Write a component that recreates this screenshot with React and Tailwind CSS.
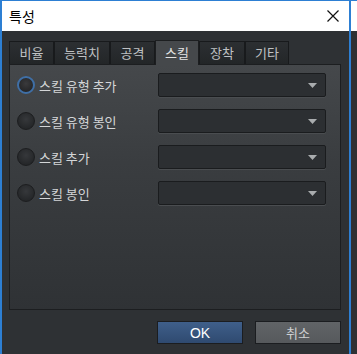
import React from "react";

const tabs = [
  { label: "비율", w: "w-[45px]" },
  { label: "능력치", w: "w-[56px]" },
  { label: "공격", w: "w-[45px]" },
  { label: "스킬", w: "w-[44px]", active: true },
  { label: "장착", w: "w-[46px]" },
  { label: "기타", w: "w-[44px]" },
];

const rows = [
  { label: "스킬 유형 추가", checked: true },
  { label: "스킬 유형 봉인" },
  { label: "스킬 추가" },
  { label: "스킬 봉인" },
];

function Radio({ checked }) {
  return (
    <div
      className={
        "w-[18px] h-[18px] rounded-full shrink-0 " +
        (checked
          ? "border-[2px] border-[#3f6fa6] bg-[radial-gradient(circle_at_50%_40%,#3a3a3c,#1d1e20)]"
          : "border border-[#1c1d1f] bg-[radial-gradient(circle_at_50%_40%,#36383b,#1e2022)]")
      }
    />
  );
}

function Select() {
  return (
    <div className="w-[168px] h-[24px] rounded-[2px] border border-[#1a1c1e] bg-[#2c2f32] shadow-[0_1px_0_#4a4d50] flex items-center justify-end pr-[8px]">
      <svg width="9" height="5" viewBox="0 0 9 5">
        <path d="M0 0 L9 0 L4.5 5 Z" fill="#a9acae" />
      </svg>
    </div>
  );
}

export default function App() {
  const font = { fontFamily: '"Noto Sans CJK KR", "Noto Sans", sans-serif' };
  return (
    <div className="w-[357px] h-[354px] flex overflow-hidden bg-[#2e3134]" style={font}>
      <div className="w-[2px] bg-[#2d7fd3]" />
      <div className="w-[347px] flex flex-col">
        <div className="h-[31px] bg-white border-t border-[#2d7fd3] flex items-center justify-between pl-[7px] pr-[10px]">
          <span className="text-[14px] text-black leading-none">특성</span>
          <svg width="12" height="12" viewBox="0 0 12 12">
            <path d="M0.5 0.5 L11.5 11.5 M11.5 0.5 L0.5 11.5" stroke="#111" strokeWidth="1.2" />
          </svg>
        </div>
        <div className="flex-1 flex flex-col bg-[#2e3134] px-[7px] pt-[10px]">
          <div className="flex items-end h-[23px] relative z-10">
            {tabs.map((t) =>
              t.active ? (
                <div
                  key={t.label}
                  className={t.w + " h-[25px] -mb-[1px] bg-[#45484b] border border-b-0 border-[#1c1e20] flex items-center justify-center text-[13px] text-[#e4e4e4]"}
                >
                  {t.label}
                </div>
              ) : (
                <div
                  key={t.label}
                  className={t.w + " h-[23px] bg-[linear-gradient(#2c2f32,#232628)] border border-[#181a1c] border-b-0 flex items-center justify-center text-[13px] text-[#bfc1c3]"}
                >
                  {t.label}
                </div>
              )
            )}
          </div>
          <div className="w-[332px] h-[246px] border border-[#1c1e20] bg-[linear-gradient(#45484b,#3a3d40_40%,#2f3235)] pl-[7px] pt-[8px] flex flex-col gap-[12px]">
            {rows.map((r) => (
              <div key={r.label} className="flex items-center h-[24px]">
                <div className="w-[141px] flex items-center gap-[4px]">
                  <Radio checked={r.checked} />
                  <span className="text-[13px] text-[#d4d6d8] leading-none">{r.label}</span>
                </div>
                <Select />
              </div>
            ))}
          </div>
          <div className="flex justify-end gap-[12px] mt-[11px] pr-[1px]">
            <div className="w-[86px] h-[23px] border border-[#1b1d20] bg-[linear-gradient(#3f5f8a,#2f4a70)] flex items-center justify-center text-[14px] text-white leading-none" style={{ fontFamily: '"Liberation Sans", sans-serif' }}>
              OK
            </div>
            <div className="w-[86px] h-[23px] border border-[#1b1d20] bg-[linear-gradient(#616467,#56595c)] flex items-center justify-center text-[13px] text-[#cfd1d3] leading-none">
              취소
            </div>
          </div>
        </div>
      </div>
      <div className="w-[2px] bg-[#2d7fd3]" />
      <div className="flex-1 flex flex-col">
        <div className="h-[31px] bg-white border-t border-[#2d7fd3]" />
        <div className="flex-1 bg-[#2e3134]" />
      </div>
    </div>
  );
}
